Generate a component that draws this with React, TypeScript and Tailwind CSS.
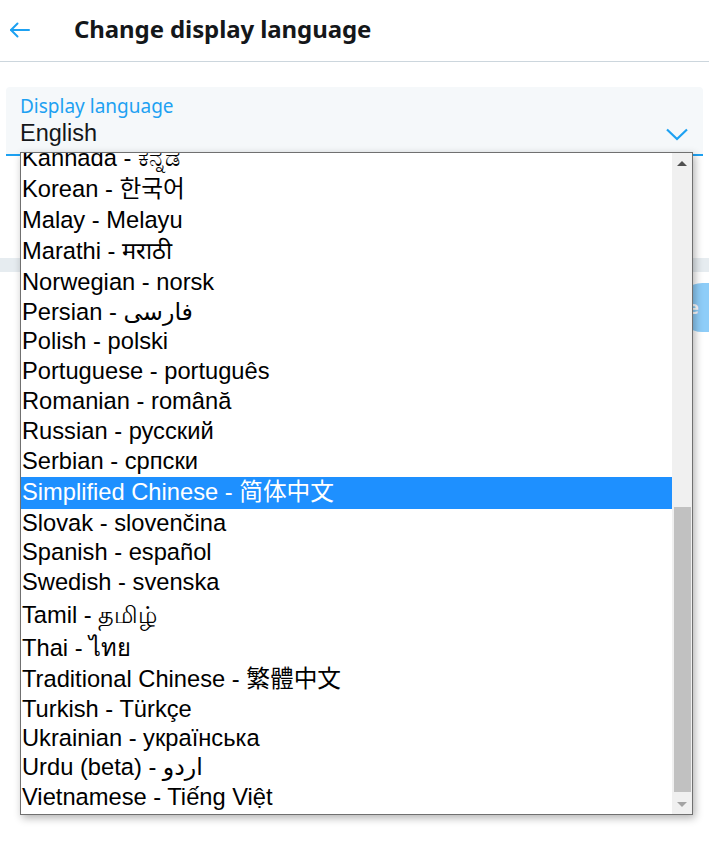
import React from 'react';

type Lang = { label: string; h: string; selected?: boolean };

const languages: Lang[] = [
  { label: 'Kannada - ಕನ್ನಡ', h: 'h-[33px]' },
  { label: 'Korean - 한국어', h: 'h-[30px]' },
  { label: 'Malay - Melayu', h: 'h-[31px]' },
  { label: 'Marathi - मराठी', h: 'h-[31px]' },
  { label: 'Norwegian - norsk', h: 'h-[31px]' },
  { label: 'Persian - فارسی', h: 'h-[29px]' },
  { label: 'Polish - polski', h: 'h-[30px]' },
  { label: 'Portuguese - português', h: 'h-[30px]' },
  { label: 'Romanian - română', h: 'h-[30px]' },
  { label: 'Russian - русский', h: 'h-[30px]' },
  { label: 'Serbian - српски', h: 'h-[30px]' },
  { label: 'Simplified Chinese - 简体中文', h: 'h-[32px]', selected: true },
  { label: 'Slovak - slovenčina', h: 'h-[29px]' },
  { label: 'Spanish - español', h: 'h-[30px]' },
  { label: 'Swedish - svenska', h: 'h-[30px]' },
  { label: 'Tamil - தமிழ்', h: 'h-[35px]' },
  { label: 'Thai - ไทย', h: 'h-[31px]' },
  { label: 'Traditional Chinese - 繁體中文', h: 'h-[31px]' },
  { label: 'Turkish - Türkçe', h: 'h-[29px]' },
  { label: 'Ukrainian - українська', h: 'h-[29px]' },
  { label: 'Urdu (beta) - اردو', h: 'h-[30px]' },
  { label: 'Vietnamese - Tiếng Việt', h: 'h-[30px]' },
];

const listFont = {
  fontFamily: '"Liberation Sans", "Noto Sans CJK KR", "Noto Sans CJK SC", "DejaVu Sans", sans-serif',
};

export default function App() {
  return (
    <div className="relative w-[709px] h-[844px] overflow-hidden bg-white font-['Noto_Sans',sans-serif]">
      {/* Header */}
      <header className="flex items-center h-[62px] border-b border-[#ccd6dd]">
        <div className="w-[74px] pl-[9px] pb-[2px]">
          <svg width="21" height="16" viewBox="0 0 21 16" fill="none" stroke="#1da1f2" strokeWidth="2" strokeLinecap="round" strokeLinejoin="round">
            <path d="M20 8H2" />
            <path d="M8.5 1.5L2 8l6.5 6.5" />
          </svg>
        </div>
        <h1 className="text-[24px] font-bold text-[#14171a] tracking-[-0.1px] pb-[3px]">Change display language</h1>
      </header>

      {/* Content */}
      <main className="pt-[25px]">
        <div className="mx-[6px] h-[69px] rounded-t-[4px] bg-[#f5f8fa] border-b-2 border-[#1da1f2] flex justify-between pl-[14px] pr-[15px]">
          <div className="flex flex-col pt-[8px]">
            <span className="text-[19px] leading-[22px] text-[#1da1f2]">Display language</span>
            <span className="mt-[2px] text-[23.5px] leading-[28px] text-[#14171a]" style={listFont}>English</span>
          </div>
          <div className="pt-[41px]">
            <svg width="22" height="13" viewBox="0 0 22 13" fill="none" stroke="#1da1f2" strokeWidth="2.2">
              <path d="M1 1.5l10 9.5 10-9.5" />
            </svg>
          </div>
        </div>

        <div className="mt-[102px] h-[14px] bg-[#e6ecf0]" />

        <div className="pl-[678px] mt-[11px]">
          <button className="w-[90px] h-[49px] rounded-full bg-[#8ecdf8] text-white font-bold text-[18px] flex items-center">
            <span className="-ml-[21px]">Save</span>
          </button>
        </div>
      </main>

      {/* Open select popup */}
      <div className="absolute left-[20px] top-[152px] w-[673px] h-[663px] border border-[#707070] bg-white shadow-[2px_3px_8px_rgba(0,0,0,0.3)] flex">
        <div className="flex-1 overflow-hidden" style={listFont}>
          <div className="-mt-[11px] flex flex-col">
            {languages.map((l) => (
              <div
                key={l.label}
                className={`${l.h} flex items-center pl-[1px] text-[23.7px] whitespace-nowrap ${
                  l.selected ? 'bg-[#1e90ff] text-white' : 'text-black'
                }`}
              >
                {l.label}
              </div>
            ))}
          </div>
        </div>
        <div className="w-[20px] bg-[#f0f0f0] flex flex-col items-center">
          <div className="h-[20px] flex items-center justify-center">
            <div className="w-0 h-0 border-l-[5px] border-r-[5px] border-b-[5px] border-l-transparent border-r-transparent border-b-[#505050]" />
          </div>
          <div className="h-[334px]" />
          <div className="w-[17px] h-[285px] bg-[#c1c1c1]" />
          <div className="flex-1" />
          <div className="h-[20px] flex items-center justify-center">
            <div className="w-0 h-0 border-l-[5px] border-r-[5px] border-t-[5px] border-l-transparent border-r-transparent border-t-[#a3a3a3]" />
          </div>
        </div>
      </div>
    </div>
  );
}
